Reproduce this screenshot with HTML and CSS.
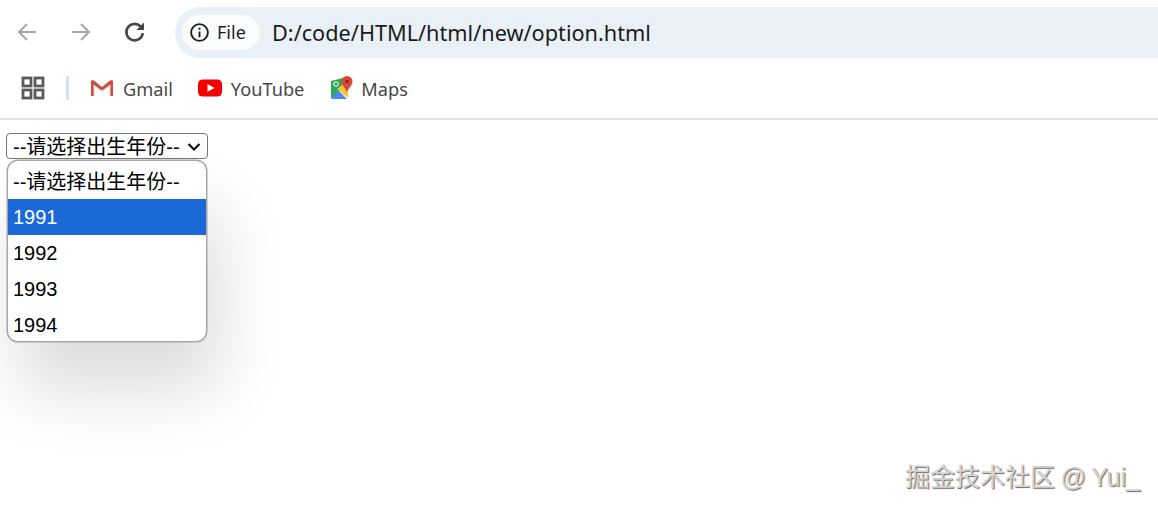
FILE: index.html
```html
<!DOCTYPE html>
<html lang="zh">
<head>
<meta charset="utf-8">
<title>option</title>
<link rel="stylesheet" href="styles.css">
</head>
<body>
<header class="chrome">
  <div class="toolbar">
    <button class="nav-btn" aria-label="Back">
      <svg width="24" height="24" viewBox="0 0 24 24" fill="none" stroke="#a6a6a6" stroke-width="2"><path d="M21 12H4M12 4l-8 8 8 8"/></svg>
    </button>
    <button class="nav-btn" aria-label="Forward">
      <svg width="24" height="24" viewBox="0 0 24 24" fill="none" stroke="#a6a6a6" stroke-width="2"><path d="M3 12h17M12 4l8 8-8 8"/></svg>
    </button>
    <button class="nav-btn" aria-label="Reload">
      <svg width="26" height="26" viewBox="0 0 24 24" fill="none" stroke="#474747" stroke-width="2.4"><path d="M19.2 13a7.6 7.6 0 1 1-2.2-6.3l2 2"/><path d="M20.3 3.2v7h-7" stroke="none" fill="#474747"/></svg>
    </button>
    <div class="omnibox">
      <span class="chip">
        <svg width="21" height="21" viewBox="0 0 22 22" fill="none" stroke="#1f1f1f" stroke-width="2"><circle cx="11" cy="11" r="8.8"/><path d="M11 10v6M11 6v2.2"/></svg>
        <span class="chip-label">File</span>
      </span>
      <span class="url">D:/code/HTML/html/new/option.html</span>
    </div>
  </div>
  <nav class="bookmarks">
    <svg class="apps" width="24" height="24" viewBox="0 0 24 24" fill="none" stroke="#5a5a5a" stroke-width="2.8"><rect x="2" y="2" width="8" height="8"/><rect x="14" y="2" width="8" height="8"/><rect x="2" y="14" width="8" height="8"/><rect x="14" y="14" width="8" height="8"/></svg>
    <span class="divider"></span>
    <a class="bookmark gmail">
      <svg width="24" height="18" viewBox="0 0 24 18"><path d="M1 17V2h2l9 7 9-7h2v15h-4V8l-7 5-7-5v9z" fill="#e3e3e3"/><path d="M1 17V2.5C1 1 3 .8 4 1.6L12 8l8-6.400C21 .8 23 1 23 2.500V17h-2.500V5.500L12 11.500 3.500 5.500V17z" fill="#cf4a40"/></svg>
      <span class="bookmark-label">Gmail</span>
    </a>
    <a class="bookmark youtube">
      <svg width="24" height="18" viewBox="0 0 24 18"><rect width="24" height="17" y=".5" rx="4.500" fill="#f40000"/><path d="M9.500 5l7 3.900-7 3.900z" fill="#fff"/></svg>
      <span class="bookmark-label">YouTube</span>
    </a>
    <a class="bookmark maps">
      <svg width="22" height="24" viewBox="0 0 22 24"><path d="M0 5l12-3v10L0 22z" fill="#2fa550"/><path d="M0 22l7-8 9 9H1z" fill="#4a8af0"/><path d="M6 13l6-5 5 9v5z" fill="#f7c92c"/><path d="M0 5h8l4 3-12 10z" fill="#30a957"/><circle cx="5" cy="8" r="2.200" fill="none" stroke="#cde7d2" stroke-width="1.200"/><path d="M16 0a5.500 5.500 0 0 1 5.500 5.500C21.500 10 17 12 16 17c-1-5-5.500-7-5.500-11.500A5.500 5.500 0 0 1 16 0z" fill="#d9483b"/><circle cx="16" cy="5.500" r="1.800" fill="#8f2a20"/></svg>
      <span class="bookmark-label">Maps</span>
    </a>
  </nav>
</header>
<main class="page">
  <div class="select-box">
    <span>--请选择出生年份--</span>
    <svg class="caret" width="14" height="10" viewBox="0 0 14 10" fill="none" stroke="#111" stroke-width="2.200"><path d="M1.500 2l5.500 5.500L12.500 2"/></svg>
  </div>
  <ul class="dropdown">
    <li class="option placeholder">--请选择出生年份--</li>
    <li class="option selected">1991</li>
    <li class="option">1992</li>
    <li class="option">1993</li>
    <li class="option">1994</li>
  </ul>
</main>
<div class="watermark">掘金技术社区 @ Yui_</div>
</body>
</html>
```

FILE: styles.css
```css
* { box-sizing: border-box; }
html, body { margin: 0; padding: 0; }
body {
  width: 1158px;
  height: 508px;
  overflow: hidden;
  background: #fff;
  position: relative;
  font-family: "Liberation Sans", "Noto Sans CJK SC", sans-serif;
}
.chrome {
  height: 120px;
  border-bottom: 2px solid #e3e3e3;
  font-family: "Noto Sans", "Noto Sans CJK SC", sans-serif;
}
.toolbar {
  height: 66px;
  padding: 7px 0 9px 0;
  display: flex;
  align-items: center;
}
.nav-btn {
  width: 54px;
  height: 50px;
  padding: 0;
  border: 0;
  background: none;
  display: flex;
  align-items: center;
  justify-content: center;
}
.omnibox {
  flex: 1;
  height: 51px;
  margin-left: 13px;
  padding-left: 7px;
  background: #e9f0f8;
  border-radius: 25px 0 0 25px;
  display: flex;
  align-items: center;
}
.chip {
  height: 35px;
  width: 78px;
  padding-left: 7px;
  border-radius: 18px;
  background: #fafcfe;
  display: flex;
  align-items: center;
  gap: 7px;
}
.chip-label {
  font-size: 18px;
  color: #1f1f1f;
}
.url {
  margin-left: 12px;
  font-size: 21.700px;
  color: #1b1b1b;
}
.bookmarks {
  height: 52px;
  padding: 0 0 8px 21px;
  display: flex;
  align-items: center;
}
.divider {
  width: 3px;
  height: 24px;
  margin-left: 21px;
  background: #d9e0f8;
}
.bookmark {
  display: flex;
  align-items: center;
  gap: 9px;
  font-size: 18.200px;
  color: #474747;
}
.bookmark-label {
  padding-top: 2px;
}
.gmail { margin-left: 21px; }
.youtube { margin-left: 25px; }
.maps { margin-left: 27px; gap: 8px; }
.page {
  position: relative;
  padding: 13px 0 0 6px;
}
.select-box {
  width: 202px;
  height: 26px;
  padding: 1px 6px 0 6px;
  border: 1px solid #767676;
  border-radius: 4px;
  background: #fff;
  color: #000;
  font-size: 20px;
  line-height: 24px;
  display: flex;
  align-items: center;
  justify-content: space-between;
  white-space: nowrap;
}
.dropdown {
  position: absolute;
  left: 7px;
  top: 40px;
  width: 200px;
  height: 182px;
  margin: 0;
  padding: 2px 0 0;
  list-style: none;
  overflow: hidden;
  background: #fff;
  border: 1px solid #a8a8a8;
  border-radius: 11px;
  box-shadow: 0 0 0 0.500px #a8a8a8, 12px 48px 68px rgba(0, 0, 0, 0.14);
}
.option {
  height: 36px;
  padding-left: 5px;
  font-size: 20px;
  line-height: 36px;
  color: #000;
  white-space: nowrap;
}
.placeholder {
  line-height: 38px;
}
.selected {
  background: #1a69d6;
  color: #fff;
}
.watermark {
  position: absolute;
  left: 905px;
  top: 462px;
  font-size: 25px;
  line-height: 30px;
  word-spacing: -1.500px;
  color: #d4d4d4;
  white-space: nowrap;
  text-shadow: 1px 1px 1px #666;
}
```
